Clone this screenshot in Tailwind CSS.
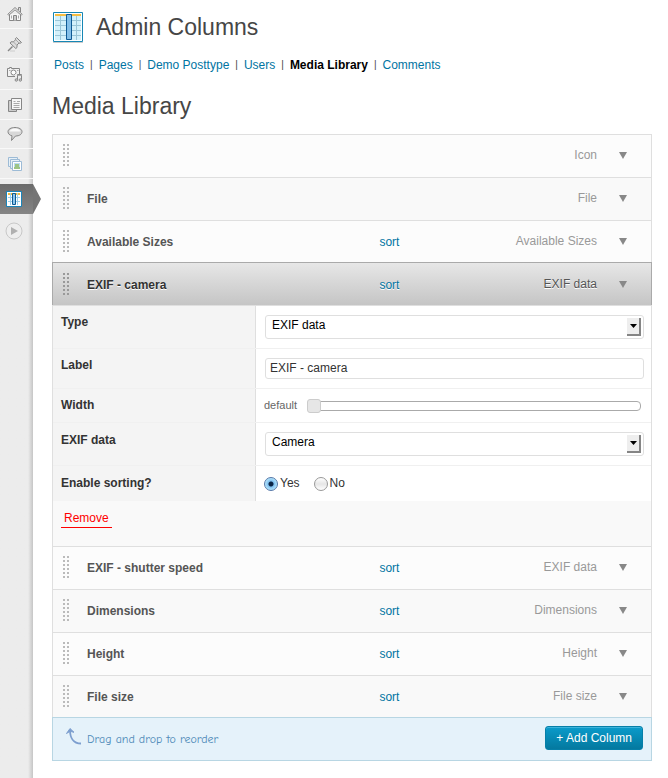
<!DOCTYPE html>
<html lang="en">
<head>
    <meta charset="UTF-8">
    <meta name="viewport" content="width=device-width, initial-scale=1.0">
    <title>Admin Columns</title>
    <script src="https://cdn.jsdelivr.net/npm/@tailwindcss/browser@4"></script>
</head>
<body class="bg-white font-['Liberation_Sans',Arial,sans-serif] text-xs text-[#333]">

    <!-- Shared shapes -->
    <svg class="hidden" aria-hidden="true">
        <symbol id="grip" viewBox="0 0 6 22">
            <path d="M1 0v22M5 0v22" fill="none" stroke="currentColor" stroke-width="2" stroke-dasharray="2 2"/>
        </symbol>
        <symbol id="arrow" viewBox="0 0 8 7">
            <path d="M0 0h8L4 7z" fill="currentColor"/>
        </symbol>
    </svg>

    <div class="flex min-h-screen">

        <!-- Admin Menu -->
        <nav class="w-[33px] shrink-0 bg-linear-to-r from-[#ececec] from-85% to-[#c6c6c6]" aria-label="Admin menu">
            <a href="#" aria-label="Dashboard" class="flex h-[29px] items-center justify-center border-b border-[#f9f9f9] pr-[3px]">
                <svg class="h-4 w-4" viewBox="0 0 16 16" fill="none" stroke="#868686">
                    <path d="M2.500 8v6.500h11V8" fill="#f7f7f7"/>
                    <path d="M11.500 4V1.500h2V6" fill="#ddd"/>
                    <path d="M.8 8.300L8 1.500l7.200 6.800-1 1L8 3.800 1.800 9.300z" fill="#eee"/>
                    <path d="M6.500 14.500v-5h3v5" fill="#ccc"/>
                    <path d="M4.500 9.500v3M11.500 9.500v3" stroke="#aaa"/>
                </svg>
            </a>
            <a href="#" aria-label="Posts" class="flex h-[30px] items-center justify-center border-b border-[#f9f9f9] pr-[3px]">
                <svg class="h-4 w-4" viewBox="0 0 16 16" fill="none" stroke="#868686">
                    <path d="M5.500 10.500L1 15" stroke-width="1.500"/>
                    <path d="M3 15h5" stroke="#ccc"/>
                    <path d="M9.500 1.500l5 5-1.500.8-1-.3-2 2v2.500l-1.200 1L3 7l1-1.200h2.500l2-2-.2-1z" fill="#ddd"/>
                    <path d="M6.500 6l3.300 3.300M9 4l3 3" stroke="#aaa"/>
                </svg>
            </a>
            <a href="#" aria-label="Media" class="flex h-[31px] items-center justify-center border-b border-[#f9f9f9] pr-[3px]">
                <svg class="h-4 w-4" viewBox="0 0 16 16" fill="none" stroke="#868686">
                    <path d="M.5 2.500h2v-1h2v1h8v8H.5z" fill="#f2f2f2"/>
                    <path d="M2 4.500h1.500M10 4.500h1.500" stroke="#aaa"/>
                    <circle cx="6.500" cy="6.500" r="2.500" fill="#fff"/>
                    <path d="M8 16V8h8v8z" fill="#ececec" stroke="none"/>
                    <path d="M10.500 14V8.500h4V14"/>
                    <path d="M10.500 9.500h4" stroke="#aaa"/>
                    <circle cx="9.300" cy="14" r="1.200" fill="#ddd"/>
                    <circle cx="13.300" cy="14" r="1.200" fill="#ddd"/>
                </svg>
            </a>
            <a href="#" aria-label="Pages" class="flex h-[30px] items-center justify-center border-b border-[#f9f9f9] pr-[3px]">
                <svg class="h-4 w-4" viewBox="0 0 16 16" fill="none" stroke="#868686">
                    <path d="M1.500 3.500h8v11h-8z" fill="#ccc"/>
                    <path d="M4.500 1.500h10v11h-10z" fill="#f7f7f7"/>
                    <path d="M6.500 4.500h2M10 4.500h3M6.500 6.500h6M6.500 8.500h6M6.500 10.500h6" stroke="#aaa"/>
                </svg>
            </a>
            <a href="#" aria-label="Comments" class="flex h-[29px] items-center justify-center border-b border-[#f9f9f9] pr-[3px]">
                <svg class="h-4 w-4" viewBox="0 0 16 16" stroke="#868686">
                    <path d="M8 1.500c4 0 7 1.700 7 4.200s-2.500 4.300-6.500 4.300L4.500 14.500 5 9.800C2.500 9.200 1 7.700 1 5.700c0-2.500 3-4.200 7-4.200z" fill="#d8d8d8"/>
                    <path d="M2.500 5.500c1-4 10-4 11 0z" fill="#fafafa" stroke="none"/>
                </svg>
            </a>
            <a href="#" aria-label="Galleries" class="flex h-[30px] items-center justify-center border-b border-[#f9f9f9] pr-[3px]">
                <svg class="h-4 w-4" viewBox="0 0 16 16" fill="#e6f0f7" stroke="#9dbbd6">
                    <path d="M1.500 1.500h9v9h-9z"/>
                    <path d="M3.500 3.500h9v9h-9z"/>
                    <path d="M5.500 5.500h9v9h-9z" fill="#fff"/>
                    <path d="M7 7h6v6H7z" fill="#b9dcf0" stroke="none"/>
                    <path d="M8 8h4v3H8zM7 11h6v2H7z" fill="#9cc486" stroke="none"/>
                </svg>
            </a>
            <a href="#" aria-label="Admin Columns" class="relative mt-[5px] flex h-[30px] items-center justify-center bg-linear-to-b from-[#6b6b6b] to-[#858585] pr-[5px]">
                <svg class="h-4 w-4" viewBox="0 0 16 16">
                    <path d="M1 1h14v14H1z" fill="#fff"/>
                    <path d="M2 2h12v2H2z" fill="#f5bb3b"/>
                    <path d="M4.500 2v12M11.500 2v12M2 6.500h12M2 10.500h12" fill="none" stroke="#9bd0ea"/>
                    <path d="M6.500 2.500h3v11h-3z" fill="#8fc5ea" stroke="#0b5a94"/>
                    <path d="M.5.5h15v15H.5z" fill="none" stroke="#1b85ba"/>
                </svg>
                <svg class="absolute top-0 left-full h-[30px] w-2" viewBox="0 0 8 30">
                    <path d="M0 0l8 15-8 15z" fill="#757575"/>
                </svg>
            </a>
            <a href="#" aria-label="Collapse menu" class="flex h-[34px] items-center justify-center pr-[5px]">
                <svg class="h-[18px] w-[18px]" viewBox="0 0 18 18">
                    <circle cx="9" cy="9" r="8" fill="#eee" stroke="#c8c8c8"/>
                    <path d="M6 5l7 4-7 4z" fill="#b0b0b0"/>
                </svg>
            </a>
        </nav>

        <main class="min-w-0 grow pt-[9px] pr-4 pb-4 pl-[19px]">

            <!-- Header -->
            <header class="flex items-center gap-3">
                <svg class="h-8 w-8" viewBox="0 0 32 32">
                    <path d="M1 31.500h30" stroke="#ccc"/>
                    <path d="M1 1h30v30H1z" fill="#fff"/>
                    <path d="M3 3h26v26H3z" fill="#d3f1fb"/>
                    <path d="M8.500 5v24M24.500 5v24M3 9.500h26M3 14.500h26M3 19.500h26M3 24.500h26" fill="none" stroke="#9bc6d8"/>
                    <path d="M3 3h26v2H3z" fill="#f7bd42"/>
                    <path d="M14.500 3.500h5v25h-5z" fill="#83bfe8" stroke="#0f5a94"/>
                    <path d="M1.500 1.500h29v29h-29z" fill="none" stroke="#1687b5"/>
                </svg>
                <h1 class="text-[23px] leading-9 text-[#464646]">Admin Columns</h1>
            </header>

            <!-- Sub Navigation -->
            <ul class="mt-[11px] flex gap-1.5 pl-0.5 leading-[18px] text-[#0074a2]">
                <li><a href="#" class="hover:text-[#d54e21]">Posts</a></li>
                <li class="text-[10px] text-[#464646]">|</li>
                <li><a href="#" class="hover:text-[#d54e21]">Pages</a></li>
                <li class="text-[10px] text-[#464646]">|</li>
                <li><a href="#" class="hover:text-[#d54e21]">Demo Posttype</a></li>
                <li class="text-[10px] text-[#464646]">|</li>
                <li><a href="#" class="hover:text-[#d54e21]">Users</a></li>
                <li class="text-[10px] text-[#464646]">|</li>
                <li><a href="#" class="font-bold text-black">Media Library</a></li>
                <li class="text-[10px] text-[#464646]">|</li>
                <li><a href="#" class="hover:text-[#d54e21]">Comments</a></li>
            </ul>

            <h2 class="mt-[14px] text-[23px] leading-9 text-[#464646]">Media Library</h2>

            <!-- Columns -->
            <div class="mt-[10px]">
                <div class="border-x border-[#dfdfdf]">
                    <div class="grid grid-cols-[34px_4fr_3fr_54px] items-center border-t border-[#dfdfdf] bg-[#fcfcfc] pt-[9px] pb-[11px]">
                        <svg class="ml-[10px] h-[22px] w-1.5 text-[#bbb]"><use href="#grip"/></svg>
                        <span></span>
                        <span class="text-right text-[#999]">Icon</span>
                        <button type="button" aria-label="Toggle Icon" class="ml-[22px] w-2"><svg class="h-[7px] w-2 text-[#888]"><use href="#arrow"/></svg></button>
                    </div>
                    <div class="grid grid-cols-[34px_4fr_3fr_54px] items-center border-t border-[#dfdfdf] bg-[#f9f9f9] pt-[9px] pb-[11px]">
                        <svg class="ml-[10px] h-[22px] w-1.5 text-[#bbb]"><use href="#grip"/></svg>
                        <span class="pt-0.5 font-bold text-[#555]">File</span>
                        <span class="text-right text-[#999]">File</span>
                        <button type="button" aria-label="Toggle File" class="ml-[22px] w-2"><svg class="h-[7px] w-2 text-[#888]"><use href="#arrow"/></svg></button>
                    </div>
                    <div class="grid grid-cols-[34px_4fr_3fr_54px] items-center border-t border-[#dfdfdf] bg-[#fcfcfc] pt-[9px] pb-[11px]">
                        <svg class="ml-[10px] h-[22px] w-1.5 text-[#bbb]"><use href="#grip"/></svg>
                        <span class="pt-0.5 font-bold text-[#555]">Available Sizes</span>
                        <span class="flex items-center justify-between pl-px text-[#999]"><a href="#" class="pt-0.5 text-[#0074a2]">sort</a>Available Sizes</span>
                        <button type="button" aria-label="Toggle Available Sizes" class="ml-[22px] w-2"><svg class="h-[7px] w-2 text-[#888]"><use href="#arrow"/></svg></button>
                    </div>
                </div>

                <!-- Open Column -->
                <div class="relative -mt-px border-x border-t border-[#aaa] bg-linear-to-b from-[#e7e7e7] to-[#c5c5c5]">
                    <div class="grid grid-cols-[34px_4fr_3fr_54px] items-center py-[10px] text-shadow-[0_1px_0_#fff]">
                        <svg class="ml-[10px] h-[22px] w-1.5 text-[#999]"><use href="#grip"/></svg>
                        <span class="pt-0.5 font-bold text-[#333]">EXIF - camera</span>
                        <span class="flex items-center justify-between pl-px text-[#555]"><a href="#" class="pt-0.5 text-[#0074a2]">sort</a>EXIF data</span>
                        <button type="button" aria-label="Toggle EXIF - camera" class="ml-[22px] w-2"><svg class="h-[7px] w-2 text-[#888]"><use href="#arrow"/></svg></button>
                    </div>
                </div>

                <!-- Column Settings -->
                <form class="border-x border-t border-[#dfdfdf] bg-[#f9f9f9] leading-[15px]">
                    <div class="grid grid-cols-[203px_1fr] border-b border-[#f0f0f0]">
                        <label for="type" class="border-r border-[#dfdfdf] bg-[#f4f4f4] px-2 py-[9px] font-bold">Type</label>
                        <div class="bg-white py-[9px] pr-[7px] pl-[9px]">
                            <div class="relative">
                                <select id="type" class="block h-6 w-full appearance-none rounded-[3px] border border-[#dfdfdf] bg-white pr-5 pb-1 pl-1.5 text-black">
                                    <option>EXIF data</option>
                                </select>
                                <span class="pointer-events-none absolute top-[3px] right-[3px] flex h-[18px] w-[14px] items-center justify-center border-r-2 border-b-2 border-[#858585] bg-[#eee]">
                                    <svg class="h-1 w-[7px]" viewBox="0 0 7 4"><path d="M0 0h7L3.500 4z"/></svg>
                                </span>
                            </div>
                        </div>
                    </div>
                    <div class="grid grid-cols-[203px_1fr] border-b border-[#f0f0f0]">
                        <label for="label" class="border-r border-[#dfdfdf] bg-[#f4f4f4] px-2 py-[9px] font-bold">Label</label>
                        <div class="bg-white py-[9px] pr-[7px] pl-[9px]">
                            <input id="label" type="text" value="EXIF - camera" class="block h-[21px] w-full rounded-[3px] border border-[#dfdfdf] bg-white px-1 pb-0.5">
                        </div>
                    </div>
                    <div class="grid grid-cols-[203px_1fr] border-b border-[#f0f0f0]">
                        <label for="width" class="border-r border-[#dfdfdf] bg-[#f4f4f4] px-2 py-[9px] font-bold">Width</label>
                        <div class="flex items-center bg-white pr-[10px] pl-2">
                            <span class="w-[43px] text-[11px] text-[#666]">default</span>
                            <input id="width" type="range" min="0" max="100" value="0" class="h-[10px] min-w-0 grow appearance-none rounded-[4px] border border-[#aaa] bg-white [&::-webkit-slider-thumb]:-ml-px [&::-webkit-slider-thumb]:h-[14px] [&::-webkit-slider-thumb]:w-[14px] [&::-webkit-slider-thumb]:appearance-none [&::-webkit-slider-thumb]:rounded-[3px] [&::-webkit-slider-thumb]:border [&::-webkit-slider-thumb]:border-[#ccc] [&::-webkit-slider-thumb]:bg-[#e6e6e6]">
                        </div>
                    </div>
                    <div class="grid grid-cols-[203px_1fr] border-b border-[#f0f0f0]">
                        <label for="exif" class="border-r border-[#dfdfdf] bg-[#f4f4f4] px-2 py-[10px] font-bold">EXIF data</label>
                        <div class="bg-white py-[9px] pr-[7px] pl-[9px]">
                            <div class="relative">
                                <select id="exif" class="block h-6 w-full appearance-none rounded-[3px] border border-[#dfdfdf] bg-white pr-5 pb-1 pl-1.5 text-black">
                                    <option>Camera</option>
                                </select>
                                <span class="pointer-events-none absolute top-[3px] right-[3px] flex h-[18px] w-[14px] items-center justify-center border-r-2 border-b-2 border-[#858585] bg-[#eee]">
                                    <svg class="h-1 w-[7px]" viewBox="0 0 7 4"><path d="M0 0h7L3.500 4z"/></svg>
                                </span>
                            </div>
                        </div>
                    </div>
                    <div class="grid grid-cols-[203px_1fr]" role="radiogroup" aria-labelledby="sorting">
                        <span id="sorting" class="border-r border-[#dfdfdf] bg-[#f4f4f4] px-2 py-[10px] font-bold">Enable sorting?</span>
                        <div class="flex items-center gap-[14px] bg-white pl-2">
                            <label class="flex items-center gap-0.5">
                                <input type="radio" name="sort" checked class="h-[14px] w-[14px] appearance-none rounded-full border border-[#5577a8] bg-linear-to-b from-[#b5d3f3] to-[#c8f2ff] checked:bg-[radial-gradient(circle,#0b2545_2px,#7fc0f0_3px,#c8f2ff_7px)]">
                                Yes
                            </label>
                            <label class="flex items-center gap-0.5">
                                <input type="radio" name="sort" class="h-[14px] w-[14px] appearance-none rounded-full border border-[#999] bg-linear-to-b from-white via-[#e6e6e6] to-white">
                                No
                            </label>
                        </div>
                    </div>
                    <div class="px-2 pt-2 pb-[18px]">
                        <button type="button" class="block border-b border-[#f00] px-[3px] leading-[18px] text-[#f00]">Remove</button>
                    </div>
                </form>

                <div class="border-x border-[#dfdfdf]">
                    <div class="grid grid-cols-[34px_4fr_3fr_54px] items-center border-t border-[#dfdfdf] bg-[#fcfcfc] pt-[9px] pb-[11px]">
                        <svg class="ml-[10px] h-[22px] w-1.5 text-[#bbb]"><use href="#grip"/></svg>
                        <span class="pt-0.5 font-bold text-[#555]">EXIF - shutter speed</span>
                        <span class="flex items-center justify-between pl-px text-[#999]"><a href="#" class="pt-0.5 text-[#0074a2]">sort</a>EXIF data</span>
                        <button type="button" aria-label="Toggle EXIF - shutter speed" class="ml-[22px] w-2"><svg class="h-[7px] w-2 text-[#888]"><use href="#arrow"/></svg></button>
                    </div>
                    <div class="grid grid-cols-[34px_4fr_3fr_54px] items-center border-t border-[#dfdfdf] bg-[#f9f9f9] pt-[9px] pb-[11px]">
                        <svg class="ml-[10px] h-[22px] w-1.5 text-[#bbb]"><use href="#grip"/></svg>
                        <span class="pt-0.5 font-bold text-[#555]">Dimensions</span>
                        <span class="flex items-center justify-between pl-px text-[#999]"><a href="#" class="pt-0.5 text-[#0074a2]">sort</a>Dimensions</span>
                        <button type="button" aria-label="Toggle Dimensions" class="ml-[22px] w-2"><svg class="h-[7px] w-2 text-[#888]"><use href="#arrow"/></svg></button>
                    </div>
                    <div class="grid grid-cols-[34px_4fr_3fr_54px] items-center border-t border-[#dfdfdf] bg-[#fcfcfc] pt-[9px] pb-[11px]">
                        <svg class="ml-[10px] h-[22px] w-1.5 text-[#bbb]"><use href="#grip"/></svg>
                        <span class="pt-0.5 font-bold text-[#555]">Height</span>
                        <span class="flex items-center justify-between pl-px text-[#999]"><a href="#" class="pt-0.5 text-[#0074a2]">sort</a>Height</span>
                        <button type="button" aria-label="Toggle Height" class="ml-[22px] w-2"><svg class="h-[7px] w-2 text-[#888]"><use href="#arrow"/></svg></button>
                    </div>
                    <div class="grid grid-cols-[34px_4fr_3fr_54px] items-center border-t border-[#dfdfdf] bg-[#f9f9f9] pt-[9px] pb-[11px]">
                        <svg class="ml-[10px] h-[22px] w-1.5 text-[#bbb]"><use href="#grip"/></svg>
                        <span class="pt-0.5 font-bold text-[#555]">File size</span>
                        <span class="flex items-center justify-between pl-px text-[#999]"><a href="#" class="pt-0.5 text-[#0074a2]">sort</a>File size</span>
                        <button type="button" aria-label="Toggle File size" class="ml-[22px] w-2"><svg class="h-[7px] w-2 text-[#888]"><use href="#arrow"/></svg></button>
                    </div>
                </div>

                <!-- Footer -->
                <div class="relative -mt-px flex items-start border border-[#b8d6e3] bg-[#e5f2fa] pt-2 pr-2 pb-[10px] pl-[13px]">
                    <svg class="mt-0.5 h-[17px] w-4 text-[#7d9fcf]" viewBox="0 0 16 17" fill="none" stroke="currentColor">
                        <path d="M4 2c0 7 3 13.500 11 13.500" stroke-width="1.800"/>
                        <path d="M.5 5.500L4 .5l4 3.800-4-1z" fill="currentColor"/>
                    </svg>
                    <p class="ml-[5px] grow pt-1 font-['Comic_Sans_MS','Comic_Neue',cursive] leading-[18px] text-[#4f8ab8]">Drag and drop to reorder</p>
                    <button type="button" class="h-6 rounded-[3px] border border-[#067fa8] bg-linear-to-b from-[#0a9bcb] to-[#04799f] px-[10px] text-white inset-shadow-[0_1px_0_#3ab3dc] hover:to-[#036a8b]">+ Add Column</button>
                </div>
            </div>
        </main>
    </div>

</body>
</html>
